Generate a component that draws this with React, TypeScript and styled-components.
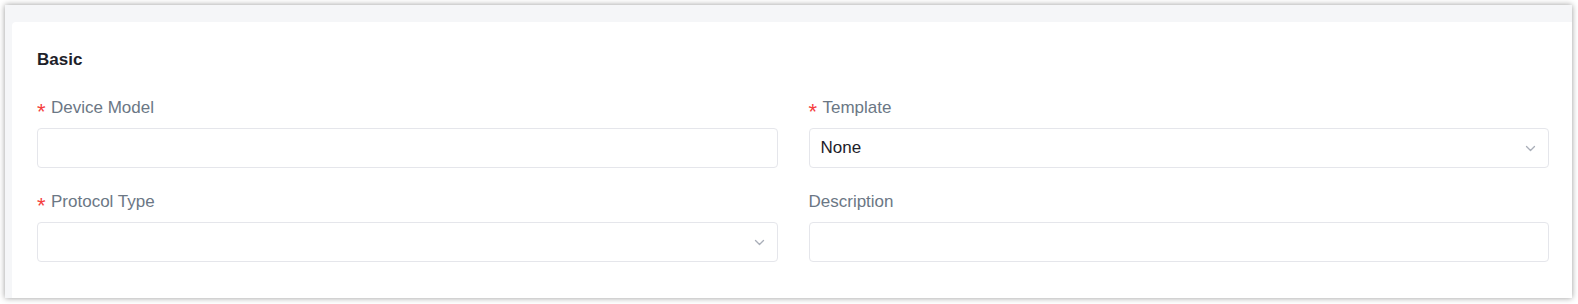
import styled, { createGlobalStyle } from 'styled-components';

const GlobalStyle = createGlobalStyle`
  html, body {
    margin: 0;
    padding: 0;
    background: #fff;
  }
  body {
    font-family: 'Liberation Sans', Arial, sans-serif;
  }
`;

const Page = styled.div`
  width: 1578px;
  height: 304px;
  box-sizing: border-box;
  padding: 5px 6px 6px 5px;
  background: #fff;
`;

const Frame = styled.div`
  height: 100%;
  box-sizing: border-box;
  padding: 17px 0 0 7px;
  background: #f5f6f8;
  box-shadow: 0 0 6px rgba(0, 0, 0, 0.4);
  display: flex;
`;

const Card = styled.section`
  flex: 1;
  background: #fff;
  border-top-left-radius: 4px;
  padding: 27px 23px 0 25px;
`;

const SectionTitle = styled.h3`
  margin: 0 0 26px;
  font-size: 17px;
  line-height: 22px;
  font-weight: 700;
  color: #1d2129;
`;

const Grid = styled.div`
  display: grid;
  grid-template-columns: 1fr 1fr;
  column-gap: 31px;
  row-gap: 23px;
`;

const Field = styled.div`
  display: flex;
  flex-direction: column;
  gap: 9px;
`;

const Label = styled.label`
  display: flex;
  align-items: center;
  height: 22px;
  font-size: 17px;
  color: #6b7785;
  white-space: nowrap;
`;

const Required = styled.span`
  color: #f53f3f;
  font-size: 22px;
  line-height: 22px;
  width: 14px;
  position: relative;
  top: 4px;
`;

const Box = styled.div`
  position: relative;
  box-sizing: border-box;
  height: 40px;
  border: 1px solid #e5e6eb;
  border-radius: 4px;
  background: #fff;
  display: flex;
  align-items: center;
  padding: 0 36px 0 11px;
  font-size: 17px;
  color: #1d2129;
`;

const Chevron = styled.svg`
  position: absolute;
  right: 12px;
  top: 50%;
  width: 11px;
  height: 7px;
  margin-top: -3px;
`;

type TFieldProps = {
  label: string;
  required?: boolean;
  select?: boolean;
  value?: string;
};

const FormField = ({ label, required, select, value }: TFieldProps) => (
  <Field>
    <Label>
      {required && <Required>*</Required>}
      {label}
    </Label>
    <Box>
      {value}
      {select && (
        <Chevron viewBox="0 0 11 7" fill="none">
          <path d="M1.5 1.5l4 4 4-4" stroke="#a9aeb8" strokeWidth="1.3" strokeLinecap="round" strokeLinejoin="round" />
        </Chevron>
      )}
    </Box>
  </Field>
);

const App = () => (
  <>
    <GlobalStyle />
    <Page>
      <Frame>
        <Card>
          <SectionTitle>Basic</SectionTitle>
          <Grid>
            <FormField label="Device Model" required />
            <FormField label="Template" required select value="None" />
            <FormField label="Protocol Type" required select />
            <FormField label="Description" />
          </Grid>
        </Card>
      </Frame>
    </Page>
  </>
);

export default App;
